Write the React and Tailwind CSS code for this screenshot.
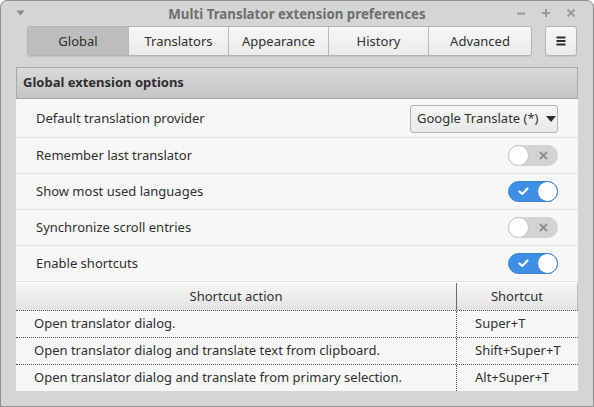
import React from "react";

const font = { fontFamily: '"Noto Sans", "Open Sans", sans-serif' };

function Toggle({ on }) {
  if (on) {
    return (
      <div className="relative w-[50px] h-[21px] rounded-full bg-[#3d8fe4] border border-[#3584d8]">
        <svg className="absolute left-[9px] top-[5px]" width="11" height="9" viewBox="0 0 11 9">
          <path d="M1.5 4.5 L4.2 7 L9.5 1.5" stroke="white" strokeWidth="2.2" fill="none" strokeLinecap="round" strokeLinejoin="round" />
        </svg>
        <div className="absolute right-[-1px] top-[-1px] w-[21px] h-[21px] rounded-full bg-white border border-[#3584d8]" />
      </div>
    );
  }
  return (
    <div className="relative w-[50px] h-[21px] rounded-full bg-[#d3d3d3]">
      <svg className="absolute right-[10px] top-[6px]" width="9" height="9" viewBox="0 0 9 9">
        <path d="M1.5 1.5 L7.5 7.5 M7.5 1.5 L1.5 7.5" stroke="#8c8c8c" strokeWidth="1.8" strokeLinecap="round" />
      </svg>
      <div className="absolute left-0 top-0 w-[21px] h-[21px] rounded-full bg-white border border-[#c4c4c4]" />
    </div>
  );
}

function Row({ label, children, h, last }) {
  return (
    <div className={`flex items-center justify-between pl-[20px] pr-[20px] bg-[#f7f7f7] ${last ? "" : "border-b border-[#e2e2e2]"} ${h}`}>
      <span className="text-[13px] text-[#303030]">{label}</span>
      {children}
    </div>
  );
}

const tabs = ["Global", "Translators", "Appearance", "History", "Advanced"];
const shortcuts = [
  ["Open translator dialog.", "Super+T"],
  ["Open translator dialog and translate text from clipboard.", "Shift+Super+T"],
  ["Open translator dialog and translate from primary selection.", "Alt+Super+T"],
];

export default function App() {
  return (
    <div style={font} className="w-[594px] h-[407px] bg-[#d5d5d5] border border-[#8f8f8f] rounded-t-[7px] flex flex-col overflow-hidden">
      {/* title bar */}
      <div className="h-[25px] shrink-0 flex items-center px-[15px]">
        <div className="w-[80px] flex">
          <svg width="9" height="6" viewBox="0 0 9 6" className="mt-[-2px]">
            <path d="M0.5 0.5 L8.5 0.5 L4.5 5.5 Z" fill="#8a8a8a" />
          </svg>
        </div>
        <div className="flex-1 text-center text-[13.3px] font-bold text-[#6e6e6e] pt-[2px]">
          Multi Translator extension preferences
        </div>
        <div className="w-[80px] flex items-center justify-end gap-[15px] pr-[2px] mt-[-1px]">
          <svg width="10" height="10" viewBox="0 0 10 10"><path d="M1 5.5 H9" stroke="#9a9a9a" strokeWidth="2" /></svg>
          <svg width="10" height="10" viewBox="0 0 10 10"><path d="M1 5 H9 M5 1 V9" stroke="#9a9a9a" strokeWidth="2" /></svg>
          <svg width="10" height="10" viewBox="0 0 10 10"><path d="M1.5 1.5 L8.5 8.5 M8.5 1.5 L1.5 8.5" stroke="#9a9a9a" strokeWidth="2" /></svg>
        </div>
      </div>

      {/* tabs row */}
      <div className="h-[30px] shrink-0 flex pl-[26px] pr-[16px]">
        <div className="flex w-[505px] h-[30px] rounded-[3px] border border-[#b3b3b3] overflow-hidden shadow-[0_1px_0_rgba(0,0,0,0.08)]">
          {tabs.map((t, i) => (
            <div
              key={t}
              className={`flex items-center justify-center text-[13px] text-[#303030] pt-[1px] ${i === 4 ? "flex-1" : "w-[100px]"} ${i > 0 ? "border-l border-[#b8b8b8]" : ""} ${i === 0 ? "bg-[#bdbdbd]" : "bg-gradient-to-b from-[#f7f7f7] to-[#ebebeb]"}`}
            >
              {t}
            </div>
          ))}
        </div>
        <div className="ml-auto w-[32px] h-[30px] rounded-[3px] border border-[#b3b3b3] bg-gradient-to-b from-[#f7f7f7] to-[#ebebeb] flex items-center justify-center shadow-[0_1px_0_rgba(0,0,0,0.08)]">
          <svg width="10" height="10" viewBox="0 0 10 10">
            <path d="M0.5 1.5 H9.5 M0.5 5 H9.5 M0.5 8.5 H9.5" stroke="#2e2e2e" strokeWidth="2" />
          </svg>
        </div>
      </div>

      {/* panel */}
      <div className="mt-[11px] mx-[15px] flex flex-col">
        <div className="h-[32px] border border-[#a9a9a9] bg-gradient-to-b from-[#dadada] to-[#c4c4c4] flex items-center px-[6px] text-[13px] font-bold text-[#2e2e2e]">
          Global extension options
        </div>
        <Row label="Default translation provider" h="h-[39px] pt-[2px]">
          <div className="w-[148px] h-[28px] rounded-[3px] border border-[#b3b3b3] bg-gradient-to-b from-[#f5f5f5] to-[#e9e9e9] flex items-center gap-[7px] pl-[6px] text-[13px] text-[#303030]">
            <span>Google Translate (*)</span>
            <svg width="10" height="6" viewBox="0 0 10 6"><path d="M0 0 H10 L5 6 Z" fill="#2e2e2e" /></svg>
          </div>
        </Row>
        <Row label="Remember last translator" h="h-[36px]"><Toggle on={false} /></Row>
        <Row label="Show most used languages" h="h-[36px]"><Toggle on={true} /></Row>
        <Row label="Synchronize scroll entries" h="h-[36px]"><Toggle on={false} /></Row>
        <Row label="Enable shortcuts" h="h-[36px]"><Toggle on={true} /></Row>

        {/* table */}
        <div className="bg-[#f7f7f7] border-t border-[#ffffff]">
          <div className="flex h-[28px] bg-gradient-to-b from-[#f6f6f6] to-[#e3e3e3] border-b border-dotted border-[#555]">
            <div className="w-[441px] flex items-center justify-center text-[13px] text-[#303030] border-r border-[#6a6a6a]">Shortcut action</div>
            <div className="flex-1 flex items-center justify-center text-[13px] text-[#303030] border-r border-[#bdbdbd]">Shortcut</div>
          </div>
          {shortcuts.map(([a, s], i) => (
            <div key={a} className={`flex ${i < 2 ? "h-[27px] border-b border-dotted border-[#555]" : "h-[26px]"}`}>
              <div className="w-[441px] flex items-center pl-[18px] text-[13px] text-[#303030] border-r border-dotted border-[#555]">{a}</div>
              <div className="flex-1 flex items-center pl-[18px] text-[13px] text-[#303030]">{s}</div>
            </div>
          ))}
        </div>
      </div>
    </div>
  );
}
